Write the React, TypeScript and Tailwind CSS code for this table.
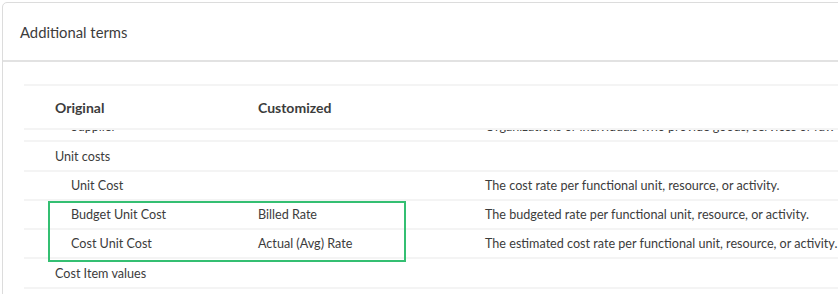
type Term = {
  original: string
  customized?: string
  description?: string
  child?: boolean
}

const TERMS: Term[] = [
  {
    original: 'Supplier',
    description:
      'Organizations or individuals who provide goods, services or raw materials to the project.',
    child: true,
  },
  { original: 'Unit costs' },
  {
    original: 'Unit Cost',
    description: 'The cost rate per functional unit, resource, or activity.',
    child: true,
  },
  {
    original: 'Budget Unit Cost',
    customized: 'Billed Rate',
    description: 'The budgeted rate per functional unit, resource, or activity.',
    child: true,
  },
  {
    original: 'Cost Unit Cost',
    customized: 'Actual (Avg) Rate',
    description: 'The estimated cost rate per functional unit, resource, or activity.',
    child: true,
  },
  { original: 'Cost Item values' },
]

function TermRow({ term }: { term: Term }) {
  return (
    <div className="flex h-[29.3px] items-center border-b-2 border-[#f4f4f4] pt-[2px] text-[12.6px] text-[#3c3c3c] whitespace-nowrap">
      <div className={`w-[234px] shrink-0 ${term.child ? 'pl-[47px]' : 'pl-[31px]'}`}>
        {term.original}
      </div>
      <div className="w-[227px] shrink-0">{term.customized}</div>
      <div className="flex-1">{term.description}</div>
    </div>
  )
}

export default function App() {
  return (
    <div
      className="h-[294px] w-[838px] overflow-hidden bg-white pl-[2px] pt-[2px]"
      style={{ fontFamily: 'Lato, "Noto Sans", sans-serif' }}
    >
      <div className="w-[900px] h-[320px] rounded-tl-[5px] border border-[#dcdcdc] bg-white">
        {/* card header */}
        <div className="flex h-[59px] items-center border-b-2 border-[#e2e2e2] pl-[17px] pt-[1px] text-[14.8px] text-[#3c3c3c]">
          Additional terms
        </div>

        {/* terms table */}
        <div className="pl-[21px] pt-[22px]">
          <div className="relative border-t-2 border-[#f4f4f4]">
            <div className="relative z-10 flex h-[44px] items-center border-b-2 border-[#f4f4f4] bg-white text-[14px] font-bold text-[#3c3c3c]">
              <div className="w-[234px] shrink-0 pl-[31px]">Original</div>
              <div className="w-[227px] shrink-0">Customized</div>
            </div>
            <div className="-mt-[17px]">
              {TERMS.map((term) => (
                <TermRow key={term.original} term={term} />
              ))}
            </div>
            {/* highlight around the renamed rows */}
            <div className="pointer-events-none absolute left-[24px] top-[115px] h-[61px] w-[358px] border-2 border-[#34bf72]" />
          </div>
        </div>
      </div>
    </div>
  )
}
